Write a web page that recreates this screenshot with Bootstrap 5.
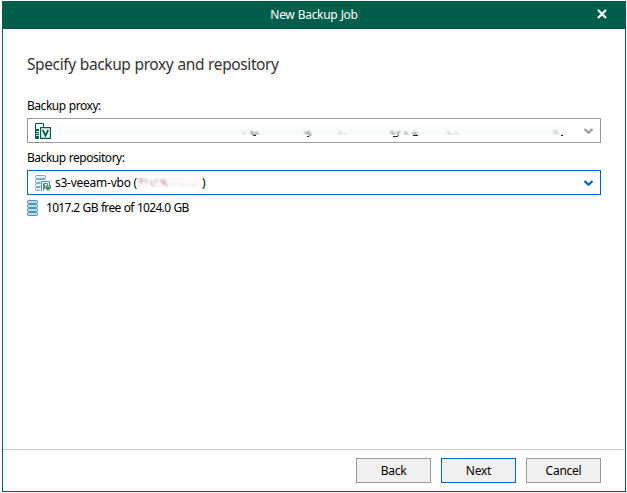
<!DOCTYPE html>
<html lang="en">
<head>
<meta charset="utf-8">
<meta name="viewport" content="width=device-width, initial-scale=1">
<title>New Backup Job</title>
<link href="https://cdn.jsdelivr.net/npm/bootstrap@5.3.0/dist/css/bootstrap.min.css" rel="stylesheet">
<style>
body{font-family:"Noto Sans","Open Sans",sans-serif;font-size:12px;line-height:16px;color:#000;background:#fff;height:493px;overflow:hidden;padding:1px 1px 1px 2px}
.dialog{height:491px;border:1px solid #005f4b;border-top:0}
.titlebar{height:28px;background:#005f4b;margin:0 -1px;letter-spacing:-.32px;word-spacing:.5px}
.close-btn{right:18px;top:7px;width:12px;height:12px}
.content-area{padding:23px 24px 0}
h1{font-size:15.5px;line-height:24px;color:#333;font-weight:400;letter-spacing:-.39px;word-spacing:.4px;margin:0 0 22px}
.field-label{height:16px;margin-bottom:4px;letter-spacing:-.47px;word-spacing:.5px}
.combo{height:25px;border:1px solid #999;padding:0 7px;margin-bottom:7px}
.combo.active{border-color:#0066b4;margin-bottom:5px}
.combo-text{letter-spacing:-.25px;margin-left:4px}
.capacity{font-size:12px;letter-spacing:-.68px;word-spacing:.7px;height:16px}
.foot{height:42px;border-top:1px solid #ccc;padding:8px 24px 0;gap:10px}
.dlg-btn{width:75px;height:25px;padding:0;border:1px solid #999;border-radius:0;background:#f0f0f0;font-size:12px;line-height:23px;color:#000;letter-spacing:-.25px}
.dlg-btn.default{border-color:#0066b4}
svg{display:block;flex:none}
</style>
</head>
<body>
<main class="dialog d-flex flex-column">
<header class="titlebar position-relative d-flex align-items-center justify-content-center text-white">
<span>New Backup Job</span>
<button class="close-btn position-absolute border-0 bg-transparent p-0" aria-label="Close"><svg width="12" height="12" viewBox="0 0 12 12"><path d="M2 2 10 10M10 2 2 10" stroke="#fff" stroke-width="2.2"/></svg></button>
</header>
<section class="content-area flex-grow-1">
<h1>Specify backup proxy and repository</h1>
<div class="field-label">Backup proxy:</div>
<div class="combo d-flex align-items-center">
<svg width="16" height="16" viewBox="0 0 16 16"><path d="M.5 6V.5h8V4" fill="none" stroke="#005f4b"/><path d="M0 6h4v10H0z" fill="#005f4b"/><path d="M1 8.500h3M1 10.500h3M1 12.500h3" stroke="#fff" stroke-width=".8"/><path d="M5.600 4.600h9.800v10.800H5.600z" fill="#fff" stroke="#005f4b" stroke-width="1.200"/><path d="M7.800 7 10.500 12.600 13.200 7" fill="none" stroke="#005f4b" stroke-width="1.800"/></svg>
<svg class="ms-1" width="516" height="16" viewBox="0 0 516 16" aria-hidden="true">
<defs><filter id="soft"><feGaussianBlur stdDeviation=".8"/></filter><linearGradient id="haze" x2="0" y2="1"><stop stop-color="#fcfefe"/><stop offset="1" stop-color="#f7fafa"/></linearGradient><clipPath id="strip"><path d="M0 0h516v12H0z"/></clipPath></defs>
<path d="M2 1h508v11H2z" fill="url(#haze)"/>
<g clip-path="url(#strip)"><g filter="url(#soft)" fill="none" stroke="#79878a" stroke-width="1.800">
<path d="M196 8l2 4 4-1v-2M250 9l2 2M254 8v4M336 8l3 4M344 8l-2 4M350 9l2 3M358 12q2-4 4 0"/>
<path d="M189 9v3M284 8l2 4M290 10v2M393 8q0 5 4 4M402 9v3M498 8l6 4M501 11v-4" opacity=".4"/>
</g></g>
<path d="M198 12.500h3M252 13.500h2l2-2M338 13.500h4l2-1M358 12.500h5M506 12.500h2" fill="none" stroke="#252a2d" stroke-width="1"/>
</svg>
<svg class="ms-auto" width="10" height="8" viewBox="0 0 10 8"><path d="M1.500 2 5.500 5.700 9.500 2" fill="none" stroke="#999" stroke-width="2.200"/></svg>
</div>
<div class="field-label">Backup repository:</div>
<div class="combo active d-flex align-items-center">
<svg width="16" height="16" viewBox="0 0 16 16"><g fill="#e4f2fb" stroke="#5a9ac8" stroke-width=".8"><rect x=".5" y=".5" width="10" height="3" rx="1"/><rect x=".5" y="4.500" width="10" height="3" rx="1"/><rect x=".5" y="8.500" width="10" height="3" rx="1"/><rect x=".5" y="12.500" width="10" height="3" rx="1"/></g><path d="M5.500 5.500h9v10h-9z" fill="#fff"/><path d="M6.500 15V6.500h8V11M8.500 15V8.500h4V11" fill="none" stroke="#5a88a8"/><path d="M9.500 9v5" stroke="#777" stroke-width="1.200"/><path d="M10.500 10.500H16V13L13 16l-2.500-2.500z" fill="#3c9150"/><path d="M12 11.500h3" stroke="#a2d4ac"/></svg>
<span class="combo-text">s3-veeam-vbo (</span>
<svg width="65" height="16" viewBox="0 0 65 16" aria-hidden="true"><defs><filter id="name-soft"><feGaussianBlur stdDeviation=".8"/></filter></defs><path d="M0 2h64v10H0z" fill="#fdf9f8"/><g filter="url(#name-soft)" fill="none" stroke="#b99da5" stroke-width="1.500"><path d="M1 4h4v3H2M8 4l2 4M14 6l2 6M20 4l-2 4M24 4l2 5 2-5M28 7l2 5" opacity=".85"/><path d="M4 10l3 2M18 11h4M34 10h5M43 10h5M53 10h5" opacity=".14"/></g></svg>
<span>)</span>
<svg class="ms-auto" width="10" height="8" viewBox="0 0 10 8"><path d="M1.500 2 5.500 5.700 9.500 2" fill="none" stroke="#0066b4" stroke-width="2.200"/></svg>
</div>
<div class="capacity d-flex align-items-center">
<svg width="11" height="16" viewBox="0 0 11 16"><g fill="#b9dcf5" stroke="#4589c3" stroke-width=".9"><path d="M.5 2v11.500q0 2 2 2h6q2 0 2-2V2z" stroke="none"/><rect x=".5" y=".5" width="10" height="3" rx="1.200"/><rect x=".5" y="4.500" width="10" height="3" rx="1.200"/><rect x=".5" y="8.500" width="10" height="3" rx="1.200"/><rect x=".5" y="12.500" width="10" height="3" rx="1.200"/></g></svg>
<span class="ms-2">1017.2 GB free of 1024.0 GB</span>
</div>
</section>
<footer class="foot d-flex justify-content-end">
<button class="btn dlg-btn">Back</button><button class="btn dlg-btn default">Next</button><button class="btn dlg-btn">Cancel</button>
</footer>
</main>
<script src="https://cdn.jsdelivr.net/npm/bootstrap@5.3.0/dist/js/bootstrap.bundle.min.js"></script>
</body>
</html>
